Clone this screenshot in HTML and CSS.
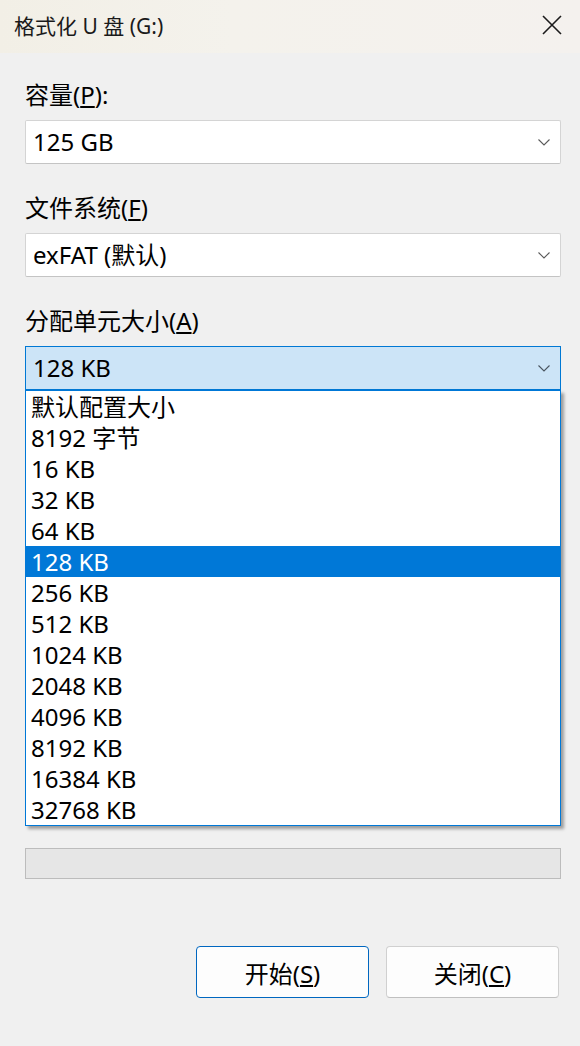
FILE: index.html
```html
<!DOCTYPE html>
<html lang="zh-CN">
<head>
<meta charset="utf-8">
<title>格式化 U 盘 (G:)</title>
<link rel="stylesheet" href="styles.css">
</head>
<body>
<div class="dialog">
  <div class="titlebar">
    <span class="title">格式化 U 盘 (G:)</span>
    <svg class="close" width="20" height="20" viewBox="0 0 20 20"><path d="M1 1 L19 19 M19 1 L1 19" stroke="#1b1b1b" stroke-width="1.6" fill="none"/></svg>
  </div>
  <div class="content">
    <div class="field">
      <div class="label">容量(<u>P</u>):</div>
      <div class="select">
        <span>125 GB</span>
        <svg class="chev" width="12" height="7" viewBox="0 0 12 7"><polyline points="0.5,0.5 6,6 11.5,0.5" fill="none" stroke="#5a5a5a" stroke-width="1.1"/></svg>
      </div>
    </div>
    <div class="field">
      <div class="label">文件系统(<u>F</u>)</div>
      <div class="select">
        <span>exFAT (默认)</span>
        <svg class="chev" width="12" height="7" viewBox="0 0 12 7"><polyline points="0.5,0.5 6,6 11.5,0.5" fill="none" stroke="#5a5a5a" stroke-width="1.1"/></svg>
      </div>
    </div>
    <div class="field">
      <div class="label">分配单元大小(<u>A</u>)</div>
      <div class="combo">
        <div class="select active">
          <span>128 KB</span>
          <svg class="chev" width="12" height="7" viewBox="0 0 12 7"><polyline points="0.5,0.5 6,6 11.5,0.5" fill="none" stroke="#4a5560" stroke-width="1.1"/></svg>
        </div>
        <ul class="list">
          <li>默认配置大小</li>
          <li>8192 字节</li>
          <li>16 KB</li>
          <li>32 KB</li>
          <li>64 KB</li>
          <li class="sel">128 KB</li>
          <li>256 KB</li>
          <li>512 KB</li>
          <li>1024 KB</li>
          <li>2048 KB</li>
          <li>4096 KB</li>
          <li>8192 KB</li>
          <li>16384 KB</li>
          <li>32768 KB</li>
        </ul>
      </div>
    </div>
    <div class="progress"></div>
    <div class="buttons">
      <button class="btn primary">开始(<u>S</u>)</button>
      <button class="btn">关闭(<u>C</u>)</button>
    </div>
  </div>
</div>
</body>
</html>
```
FILE: styles.css
```css
html, body {
  margin: 0;
  padding: 0;
}
body {
  font-family: "Noto Sans", "Noto Sans CJK SC", sans-serif;
  color: #000;
  background: #f0f0f0;
}
.dialog {
  width: 580px;
  height: 1046px;
  background: #f0f0f0;
  overflow: hidden;
}
.titlebar {
  height: 53px;
  display: flex;
  align-items: center;
  justify-content: space-between;
  padding: 0 18px 0 14px;
  background: linear-gradient(90deg, #f2efe6 0%, #f4f2ec 40%, #f4f1ee 100%);
}
.title {
  font-size: 21px;
  line-height: 30px;
  color: #1a1a1a;
  margin-top: -2px;
}
.close {
  display: block;
  margin-top: -4px;
}
.content {
  padding: 27px 19px 0 25px;
}
.field {
  margin-bottom: 29px;
}
.field:last-of-type {
  margin-bottom: 0;
}
.label {
  font-size: 24px;
  line-height: 30px;
  height: 30px;
  margin-bottom: 10px;
  color: #000;
}
.select {
  box-sizing: border-box;
  height: 44px;
  border: 1px solid #d4d4d4;
  border-bottom-color: #c4c4c4;
  border-radius: 2px;
  background: #fff;
  display: flex;
  align-items: center;
  justify-content: space-between;
  padding: 0 10px 0 7px;
  font-size: 24px;
}
.select span {
  line-height: 30px;
}
.chev {
  display: block;
  margin-top: 1px;
}
.select.active {
  background: #cce4f7;
  border: 1px solid #0078d4;
  border-radius: 0;
}
.combo {
  position: relative;
}
.list {
  position: absolute;
  left: 0;
  right: 0;
  top: 100%;
  margin: 0;
  padding: 0;
  list-style: none;
  background: #fff;
  border: 1px solid #0078d7;
  box-shadow: 3px 3px 3px rgba(0, 0, 0, 0.35);
  z-index: 2;
}
.list li {
  height: 31px;
  line-height: 31px;
  padding-left: 5px;
  font-size: 24px;
  white-space: nowrap;
}
.list li.sel {
  background: #0078d7;
  color: #fff;
}
.progress {
  box-sizing: border-box;
  margin-top: 458px;
  height: 31px;
  background: #e6e6e6;
  border: 1px solid #bcbcbc;
}
.buttons {
  display: flex;
  justify-content: flex-end;
  gap: 17px;
  margin-top: 67px;
  padding-right: 2px;
}
.btn {
  box-sizing: border-box;
  width: 173px;
  height: 52px;
  border: 1px solid #d0d0d0;
  border-bottom-color: #c0c0c0;
  border-radius: 4px;
  background: #fdfdfd;
  font-family: "Noto Sans", "Noto Sans CJK SC", sans-serif;
  font-size: 24px;
  color: #000;
  padding: 0;
}
.btn.primary {
  border: 1px solid #0067c0;
}
```
